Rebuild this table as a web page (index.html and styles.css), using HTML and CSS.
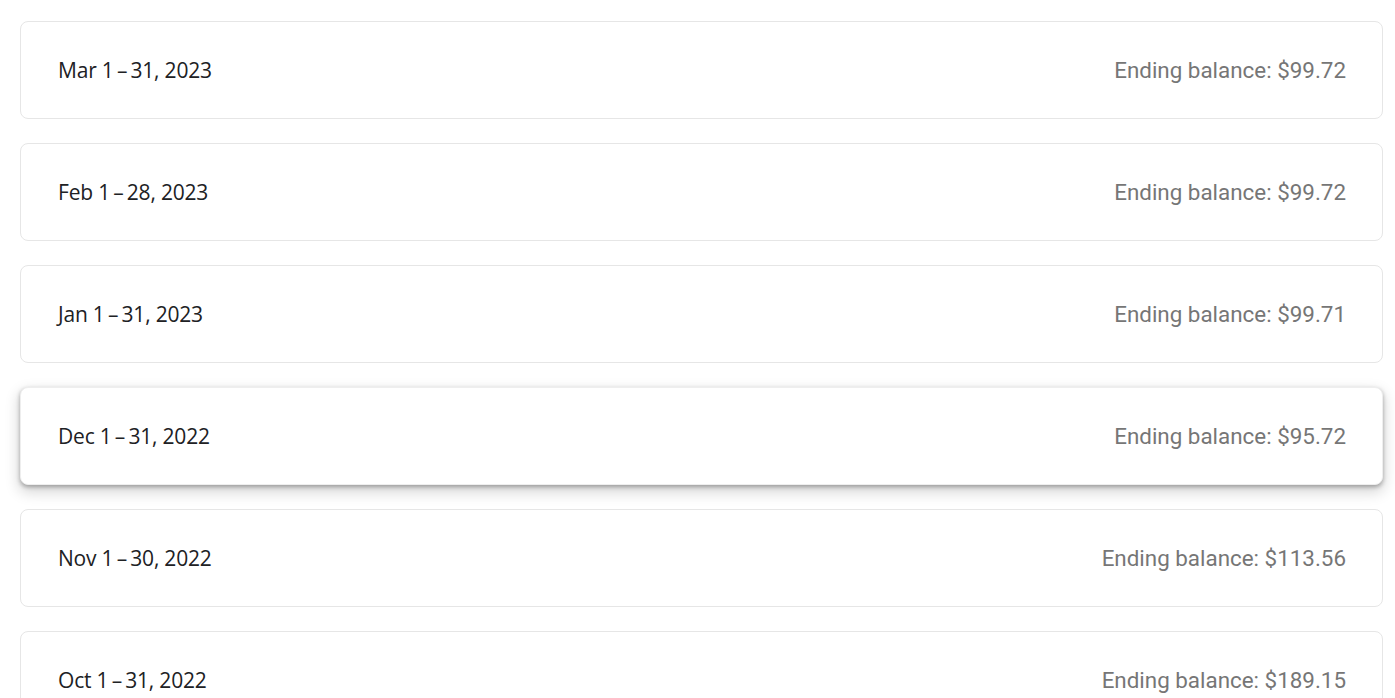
FILE: index.html
```html
<!DOCTYPE html>
<html>
<head>
<meta charset="utf-8">
<link rel="stylesheet" href="styles.css">
</head>
<body>
<div class="list">
  <div class="card"><span class="period">Mar 1&thinsp;–&thinsp;31, 2023</span><span class="balance">Ending balance: $99.72</span></div>
  <div class="card"><span class="period">Feb 1&thinsp;–&thinsp;28, 2023</span><span class="balance">Ending balance: $99.72</span></div>
  <div class="card"><span class="period">Jan 1&thinsp;–&thinsp;31, 2023</span><span class="balance">Ending balance: $99.71</span></div>
  <div class="card card-hover"><span class="period">Dec 1&thinsp;–&thinsp;31, 2022</span><span class="balance">Ending balance: $95.72</span></div>
  <div class="card"><span class="period">Nov 1&thinsp;–&thinsp;30, 2022</span><span class="balance">Ending balance: $113.56</span></div>
  <div class="card"><span class="period">Oct 1&thinsp;–&thinsp;31, 2022</span><span class="balance">Ending balance: $189.15</span></div>
</div>
</body>
</html>
```
FILE: styles.css
```css
html, body {
  margin: 0;
  padding: 0;
  background: #ffffff;
  overflow: hidden;
}
.list {
  display: flex;
  flex-direction: column;
  gap: 24px;
  padding: 21px 12px 0 20px;
}
.card {
  display: flex;
  justify-content: space-between;
  align-items: center;
  height: 98px;
  box-sizing: border-box;
  padding: 0 36px 0 37px;
  border: 1px solid #e6e6e6;
  border-radius: 8px;
  background: #fff;
}
.card-hover {
  border-color: #eeeeee;
  box-shadow: 0 2px 4px rgba(0,0,0,0.3), 0 6px 14px 2px rgba(0,0,0,0.15);
}
.period {
  font-family: "Open Sans", sans-serif;
  font-size: 21px;
  letter-spacing: -0.2px;
  color: #202124;
}
.balance {
  font-family: Roboto, sans-serif;
  font-size: 22.4px;
  color: #767676;
}
```
